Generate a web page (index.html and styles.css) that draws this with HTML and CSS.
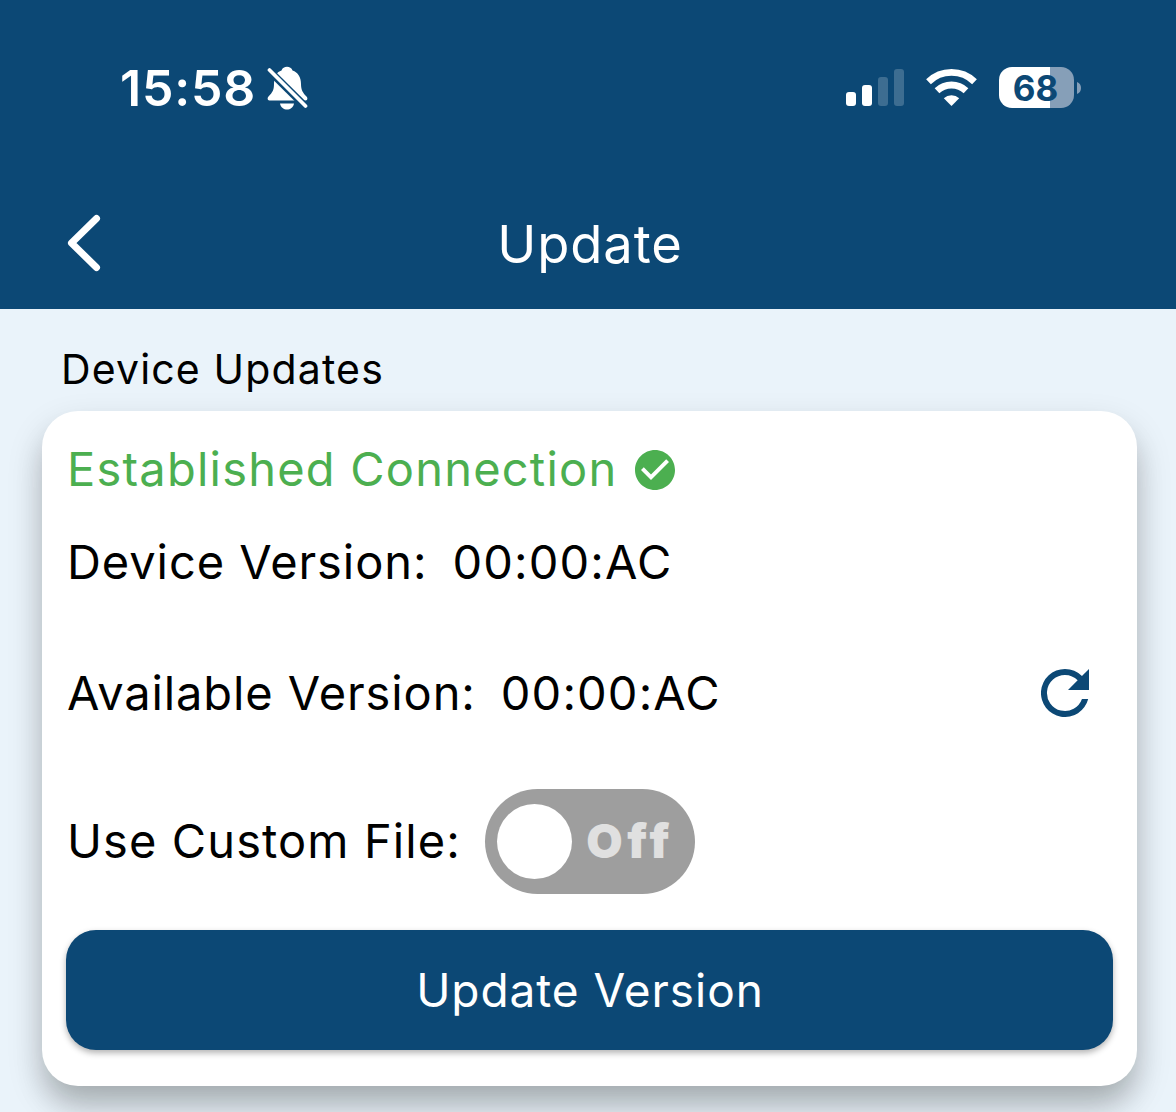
FILE: index.html
```html
<!DOCTYPE html>
<html lang="en">
<head>
<meta charset="utf-8">
<title>Update</title>
<link rel="stylesheet" href="styles.css">
</head>
<body>
<header class="header">
  <div class="status">
    <div class="status-left">
      <span class="time">15:58</span>
      <svg class="bell" viewBox="0 0 42 44"><path d="M3.500 34.500C1.500 34.500 1 32 2.500 30.500 6.500 26.500 8 24 8 18 8 10 11 6 15.500 4.500 17 -.5 25 -.5 26.500 4.500 32 6.500 35 11 35 18c0 6 2 9 5.500 12.500C42 32 41.500 34.500 39.500 34.500z" fill="#fff"/><path d="M14 37.500h14c-1.500 8-12.500 8-14 0z" fill="#fff"/><path d="M-1 .5L42 43" stroke="#0c4875" stroke-width="7.500"/><path d="M3.500 4L39.500 40" stroke="#fff" stroke-width="3.700" stroke-linecap="round"/></svg>
    </div>
    <div class="status-right">
      <svg class="signal" viewBox="0 0 59 38"><g fill="#fff"><rect y="23" width="10" height="14" rx="3"/><rect x="16" y="16" width="10" height="21" rx="3"/></g><g fill="#3d6d91"><rect x="32" y="8" width="10" height="29" rx="3"/><rect x="48" width="10" height="37" rx="3"/></g></svg>
      <svg class="wifi" viewBox="0 0 52 38"><g fill="none" stroke="#fff" stroke-width="6.800"><path d="M2.500 12.800a33 33 0 0 1 46 0"/><path d="M11 21.800a21 21 0 0 1 29 0"/></g><path d="M17.800 29.300a11.500 11.500 0 0 1 15.400 0L25.500 37z" fill="#fff"/></svg>
      <div class="battery"><span class="level">68</span><svg class="cap" viewBox="0 0 4 12"><path d="M0 0q4 1.500 4 6t-4 6z" fill="#869fb8"/></svg></div>
    </div>
  </div>
  <nav class="nav">
    <svg class="back" viewBox="0 0 40 60"><path d="M33.500 5.500L8.500 30l25 24.500" fill="none" stroke="#fff" stroke-width="7" stroke-linecap="round" stroke-linejoin="round"/></svg>
    <h1 class="title">Update</h1>
  </nav>
</header>
<main class="content">
  <h2 class="section">Device Updates</h2>
  <section class="card">
    <div class="row connection"><span class="connection-label">Established Connection</span>
      <svg class="check" viewBox="2 2 20 20"><path fill="#4caf50" d="M12 2C6.500 2 2 6.500 2 12s4.500 10 10 10 10-4.500 10-10S17.500 2 12 2zm-2 15l-5-5 1.400-1.400 3.600 3.600 7.600-7.600L19 8z"/></svg></div>
    <div class="row device"><span class="device-label">Device Version:</span><span class="value">00:00:AC</span></div>
    <div class="row available"><span class="available-label">Available Version:</span><span class="value">00:00:AC</span>
      <svg class="refresh" viewBox="4 4 16 16"><path fill="#0c4875" d="M17.650 6.350A7.960 7.960 0 0 0 12 4a8 8 0 1 0 7.730 10h-2.080A6 6 0 1 1 12 6c1.660 0 3.140.690 4.220 1.780L13 11h7V4z"/></svg></div>
    <div class="row custom"><span class="custom-label">Use Custom File:</span><span class="toggle"><span class="knob"></span><span class="off">Off</span></span></div>
    <button class="button">Update Version</button>
  </section>
</main>
</body>
</html>
```
FILE: styles.css
```css
* { box-sizing: border-box; }
body { margin: 0; height: 1112px; overflow: hidden; background: #eaf3fa; font-family: Inter, sans-serif; color: #000; }
.header { height: 309px; background: #0c4875; color: #fff; }
.status { height: 175px; display: flex; justify-content: space-between; padding: 0 95px 0 120px; align-items: center; }
.status-left, .status-right { display: flex; align-items: center; }
.time { font-size: 50px; font-weight: 600; line-height: 60px; width: 146px; white-space: nowrap; letter-spacing: .8px; }
.bell { width: 42px; height: 44px; }
.signal { width: 59px; height: 38px; margin-right: 21px; }
.wifi { width: 52px; height: 38px; margin-right: 21px; }
.battery { display: flex; align-items: center; gap: 3px; }
.level { width: 75px; height: 41px; border-radius: 13px; background: linear-gradient(90deg, #fff 68%, #869fb8 68%); color: #0c4875; font-size: 35px; line-height: 42px; font-weight: 700; text-align: center; text-indent: -2px; }
.cap { width: 4px; height: 12px; }
.nav { height: 134px; display: grid; grid-template-columns: 120px 1fr 120px; align-items: center; }
.back { width: 40px; height: 60px; margin: 2px 0 0 62.5px; }
.title { margin: 0; padding: 4px 0 0 4px; font-size: 52.5px; font-weight: 400; text-align: center; letter-spacing: .9px; }
.content { padding: 33px 39px 0 42px; }
.section { margin: 0 0 9px 19px; height: 60px; line-height: 55px; font-size: 41px; font-weight: 400; letter-spacing: 1.15px; }
.card { height: 675px; border-radius: 36px; background: #fff; padding: 12px 24px 0; box-shadow: 0 22px 30px -4px rgba(0,0,0,.18), 0 16px 36px rgba(0,10,0,.16); }
.row { display: flex; align-items: center; font-size: 47px; line-height: 56px; white-space: nowrap; padding-left: 1px; }
.row > span { position: relative; top: -1px; }
.row > .toggle { top: 0; }
.connection { height: 93px; color: #4caf50; }
.connection-label { letter-spacing: 1.22px; }
.check { width: 40px; height: 40px; margin-left: 18px; }
.device { height: 93px; }
.device-label { letter-spacing: .93px; }
.available { height: 169px; }
.available-label { letter-spacing: .9px; }
.value { margin-left: 25px; letter-spacing: 1.15px; }
.refresh { width: 48px; height: 48px; margin: -2px 24px 0 auto; }
.custom { height: 127px; }
.custom-label { letter-spacing: 1.1px; }
.toggle { width: 210px; height: 105px; border-radius: 53px; background: #9e9e9e; margin-left: 24px; padding: 0 21px 0 12px; display: flex; align-items: center; justify-content: space-between; }
.knob { width: 75px; height: 75px; border-radius: 50%; background: #fff; }
.off { color: #e0e0e0; font-weight: 900; letter-spacing: 4.5px; margin-top: -2px; }
.button { display: block; width: 100%; height: 120px; margin: 25px 0 0; border: 0; border-radius: 30px; background: #0c4875; color: #fff; font: 400 46px Inter, sans-serif; letter-spacing: .94px; padding: 0 0 0 1px; box-shadow: 0 3px 6px rgba(0,0,0,.3); }
```
